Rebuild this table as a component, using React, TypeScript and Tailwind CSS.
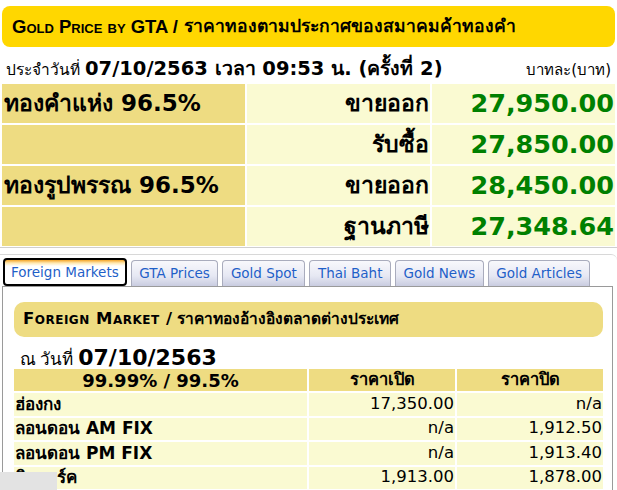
const goldRows = [
  { name: "ทองคำแห่ง 96.5%", label: "ขายออก", price: "27,950.00" },
  { name: "", label: "รับซื้อ", price: "27,850.00" },
  { name: "ทองรูปพรรณ 96.5%", label: "ขายออก", price: "28,450.00" },
  { name: "", label: "ฐานภาษี", price: "27,348.64" },
];

const tabs = ["Foreign Markets", "GTA Prices", "Gold Spot", "Thai Baht", "Gold News", "Gold Articles"];

const foreign = [
  { name: "ฮ่องกง", open: "17,350.00", close: "n/a" },
  { name: "ลอนดอน AM FIX", open: "n/a", close: "1,912.50" },
  { name: "ลอนดอน PM FIX", open: "n/a", close: "1,913.40" },
  { name: "นิวยอร์ค", open: "1,913.00", close: "1,878.00" },
];

const font = "font-['Tahoma','DejaVu_Sans','Noto_Sans',sans-serif]";

export default function App() {
  return (
    <div className={`relative w-[617px] h-[490px] overflow-hidden bg-white text-black ${font}`}>
      {/* top header */}
      <div className="pt-[6px] px-[2px]">
        <div className="h-[41px] rounded-[8px] bg-[#ffd700] flex items-center pl-[10px] font-bold whitespace-nowrap">
          <span className="text-[18.5px] font-['Liberation_Sans',sans-serif] [font-variant:small-caps]">Gold Price by GTA /</span>
          <span className="ml-[6px] text-[17.5px]">ราคาทองตามประกาศของสมาคมค้าทองคำ</span>
        </div>
      </div>

      <div className="flex items-end justify-between px-[6px] h-[37px] pb-[1px] whitespace-nowrap">
        <div className="flex items-baseline">
          <span className="text-[15.5px]">ประจำวันที่</span>
          <span className="ml-[5px] text-[19.5px] font-bold">07/10/2563 เวลา 09:53 น. (ครั้งที่ 2)</span>
        </div>
        <span className="text-[15px] mb-[2px]">บาทละ(บาท)</span>
      </div>

      <div className="px-[2px] pb-[1px] border-b border-[#cfcfcf]">
        <div className="grid grid-cols-[243px_183px_1fr] gap-[2px] bg-white">
          {goldRows.map((r, i) => (
            <div key={i} className="contents">
              <div className="h-[39px] bg-[#eedc82] flex items-center pl-[2px] text-[23px] font-bold whitespace-nowrap">{r.name}</div>
              <div className="h-[39px] bg-[#fafad2] flex items-center justify-end pr-[1px] text-[23px] font-bold">{r.label}</div>
              <div className="h-[39px] bg-[#fafad2] flex items-center justify-end pr-[1px] text-[25.5px] font-bold text-[#008000]">{r.price}</div>
            </div>
          ))}
        </div>
      </div>

      {/* tabs block */}
      <div className="mt-[6px] border-t border-[#d8d8d8] rounded-tr-[6px]">
        <div className="flex items-end pl-[3px] pt-[3px] gap-[4px]">
          {tabs.map((t, i) =>
            i === 0 ? (
              <div
                key={t}
                className="h-[28px] px-[6px] flex items-center rounded-[4px] border-2 border-black bg-[linear-gradient(#f4a52a_0px,#ffe8b0_3px,#ffffff_6px)] text-[13.5px] text-[#1f5fc8]"
              >
                {t}
              </div>
            ) : (
              <div
                key={t}
                className="h-[26px] px-[7.5px] flex items-center rounded-t-[4px] border border-b-0 border-[#a9acbd] bg-[linear-gradient(#f8f8fc,#e6e8f3_60%,#c9cce0)] text-[13.5px] text-[#1f5fc8]"
              >
                {t}
              </div>
            )
          )}
        </div>
        <div className="ml-[2px] w-[611px] border border-b-0 border-[#9a9a9a] h-[300px] pl-[11px] pr-[9px] pt-[15px]">
          <div className="h-[35px] rounded-[10px] bg-[#eedc82] flex items-center pl-[9px] font-bold whitespace-nowrap">
            <span className="text-[16.5px] tracking-[0.5px] [font-variant:small-caps]">Foreign Market /</span>
            <span className="ml-[5px] text-[15.5px]">ราคาทองอ้างอิงตลาดต่างประเทศ</span>
          </div>
          <div className="flex items-baseline pl-[6px] h-[32px] pt-[4px] whitespace-nowrap">
            <span className="text-[17px] font-['Liberation_Serif',serif]">ณ วันที่</span>
            <span className="ml-[5px] text-[22px] font-bold">07/10/2563</span>
          </div>
          <div className="grid grid-cols-[293px_146px_146px] gap-[2px]">
            <div className="h-[22px] bg-[#eedc82] flex items-center justify-center text-[18px] font-bold">99.99% / 99.5%</div>
            <div className="h-[22px] bg-[#eedc82] flex items-center justify-center text-[16.5px] font-bold">ราคาเปิด</div>
            <div className="h-[22px] bg-[#eedc82] flex items-center justify-center text-[16.5px] font-bold">ราคาปิด</div>
            {foreign.map((f) => (
              <div key={f.name} className="contents">
                <div className="h-[22.5px] bg-[#fafad2] flex items-center pl-[1px] text-[17px] font-bold whitespace-nowrap">{f.name}</div>
                <div className="h-[22.5px] bg-[#fafad2] flex items-center justify-end pr-[1px] text-[16.5px]">{f.open}</div>
                <div className="h-[22.5px] bg-[#fafad2] flex items-center justify-end pr-[1px] text-[16.5px]">{f.close}</div>
              </div>
            ))}
          </div>
        </div>
      </div>

      {/* floating grey box bottom left */}
      <div className="absolute left-0 top-[472px] w-[57px] h-[18px] bg-[#e3e3e3]" />
    </div>
  );
}
